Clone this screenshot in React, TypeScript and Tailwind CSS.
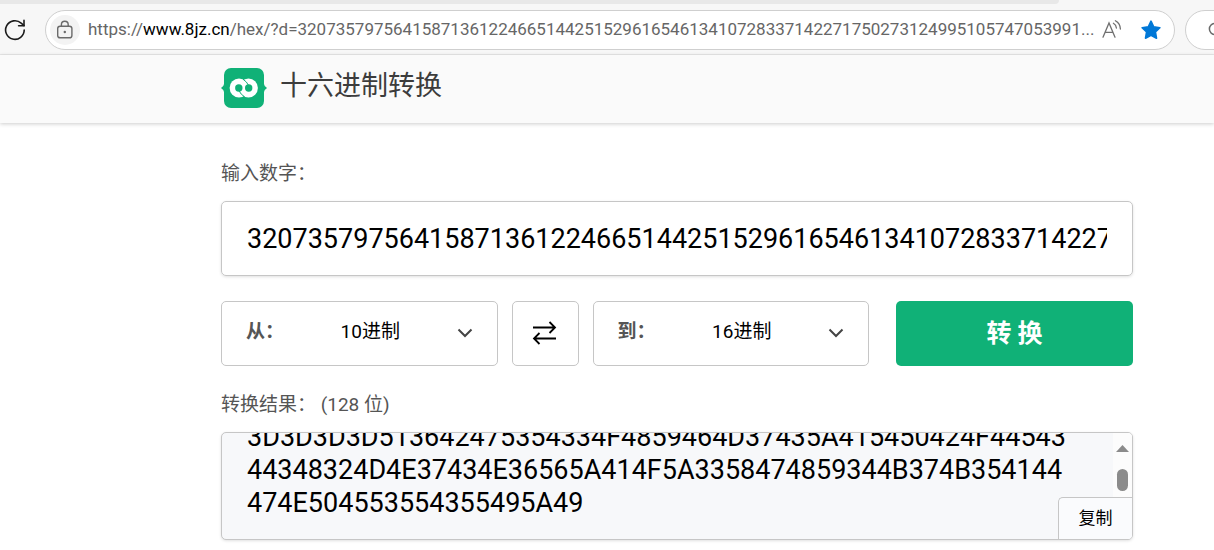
import { useLayoutEffect, useRef, useState } from "react";

const DECIMAL =
  "3207357975641587136122466514425152961654613410728337142271750273124995105747053991";

const HEX_LINES = [
  "3D3D3D3D513642475354334F4859464D37435A415450424F44543",
  "44348324D4E37434E36565A414F5A3358474859344B374B354144",
  "474E504553554355495A49",
];

const BASES = ["2", "8", "10", "16", "32"];

function ReloadIcon() {
  return (
    <svg width="22" height="22" viewBox="0 0 22 22" fill="none" stroke="#1b1b1b" strokeWidth="1.6" strokeLinecap="round">
      <path d="M20.2 11a9.3 9.3 0 1 1-3-6.8L20 6.6" />
      <path d="M20 1.4v5.4h-5.4" />
    </svg>
  );
}

function LockIcon() {
  return (
    <svg width="18" height="20" viewBox="0 0 18 20" fill="none" stroke="#6a6a6a" strokeWidth="1.4">
      <rect x="1.7" y="6.2" width="14.2" height="11.6" rx="2.4" />
      <path d="M5.4 6V4.7a3.4 3.4 0 0 1 6.8 0V6" />
      <circle cx="8.8" cy="12" r="1.2" fill="#6a6a6a" stroke="none" />
    </svg>
  );
}

function ReadAloudIcon() {
  return (
    <svg width="20" height="20" viewBox="0 0 20 20" fill="none" stroke="#707070" strokeWidth="1.3" strokeLinecap="round">
      <path d="M1 17.2 7 3l6 14.2M3.2 12.4h7.6" />
      <path d="M11.4 3.2a6 6 0 0 1 3 4.8M13.4 .8a9.6 9.6 0 0 1 5 8.2" />
    </svg>
  );
}

function StarIcon() {
  return (
    <svg width="22" height="22" viewBox="0 0 22 22">
      <path
        d="M11 2.2l2.7 5.7 6.2.8-4.5 4.3 1.1 6.2L11 16.2l-5.5 3 1.1-6.2L2.1 8.7l6.2-.8z"
        fill="#0078d7"
        stroke="#0078d7"
        strokeWidth="1.6"
        strokeLinejoin="round"
      />
    </svg>
  );
}

function Logo() {
  return (
    <svg width="46" height="40" viewBox="0 0 46 40">
      <path
        d="M10 0h26a7 7 0 0 1 7 7v9q0 2 3 4q-3 2-3 4v9a7 7 0 0 1-7 7H10a7 7 0 0 1-7-7V24q0-2-3-4q3-2 3-4V7a7 7 0 0 1 7-7z"
        fill="#10b177"
      />
      <circle cx="18" cy="20" r="9.4" fill="#fff" />
      <circle cx="27.5" cy="20" r="9.4" fill="#fff" />
      <circle cx="17.8" cy="20" r="3.7" fill="#10b177" />
      <circle cx="27.7" cy="20" r="3.7" fill="#10b177" />
      <path d="M22 11.2q4 2.6 5.4 6M18.2 23q1.4 3.4 5.4 5.8" stroke="#10b177" strokeWidth="1" fill="none" />
    </svg>
  );
}

function SwapIcon() {
  return (
    <svg width="26" height="26" viewBox="0 0 26 26" fill="none" stroke="#000" strokeWidth="1.8">
      <path d="M1 6.5h22M17.5 1l5.5 5.5-5.5 5.5M24 17.5H2M7.5 12 2 17.5 7.5 23" />
    </svg>
  );
}

function BaseSelect({ id, label, initial }: { id: string; label: string; initial: string }) {
  const [base, setBase] = useState(initial);

  return (
    <div className="flex flex-1 items-center rounded-[5px] border border-[#c6c6c6] px-6 pb-[2px]">
      <label htmlFor={id} className="text-[19px] font-bold text-[#555]">
        {label}
      </label>
      <select
        id={id}
        value={base}
        onChange={(e) => setBase(e.target.value)}
        className="min-w-0 flex-1 appearance-none bg-transparent text-center text-[19px] text-black outline-none [text-align-last:center]"
      >
        {BASES.map((b) => (
          <option key={b} value={b}>
            {b}进制
          </option>
        ))}
      </select>
      <svg width="16" height="16" viewBox="0 0 16 16" fill="none" stroke="#444" strokeWidth="2">
        <path d="M1.5 4.5 8 11l6.5-6.5" />
      </svg>
    </div>
  );
}

function BrowserBar() {
  return (
    <div className="border-b border-[#e8e8e8] bg-[#f7f7f7] pb-1">
      <div className="mr-[155px] h-1 rounded-br-lg bg-[#e8e8e8]" />
      <div className="mt-[6px] flex items-center overflow-hidden">
        <button type="button" aria-label="刷新" className="ml-1 shrink-0">
          <ReloadIcon />
        </button>
        <div className="ml-[19px] flex h-10 min-w-0 flex-1 items-center rounded-full border border-[#cfcfcf] bg-white pr-3 pl-1">
          <span className="flex size-[30px] shrink-0 items-center justify-center rounded-full bg-[#f3f3f3]">
            <LockIcon />
          </span>
          <div className="ml-2 min-w-0 flex-1 overflow-hidden font-[Roboto,'Noto_Sans',sans-serif] text-[17px] whitespace-nowrap text-[#666]">
            https://<span className="text-black">www.8jz.cn</span>/hex/?d={DECIMAL}...
          </div>
          <button type="button" aria-label="朗读此页内容" className="shrink-0">
            <ReadAloudIcon />
          </button>
          <button type="button" aria-label="收藏" className="ml-[18px] shrink-0">
            <StarIcon />
          </button>
        </div>
        <div className="-mr-6 ml-[10px] flex h-10 w-[53px] shrink-0 items-center rounded-full border border-[#cfcfcf] bg-white pl-[22px]">
          <svg width="16" height="16" viewBox="0 0 16 16" className="shrink-0" fill="none" stroke="#6a6a6a" strokeWidth="1.5">
            <circle cx="7" cy="7" r="5.6" />
          </svg>
        </div>
      </div>
    </div>
  );
}

export default function App() {
  const resultRef = useRef<HTMLTextAreaElement>(null);
  const [value, setValue] = useState(DECIMAL);

  // Keep the end of the result in view
  useLayoutEffect(() => {
    const el = resultRef.current;
    if (el) el.scrollTop = el.scrollHeight;
  }, []);

  return (
    <div className="bg-white font-[Roboto,'Noto_Sans_CJK_SC',sans-serif]">
      <BrowserBar />

      <header className="flex h-[68px] items-center bg-[#fafafa] pr-[81px] pb-[2px] pl-[221px] shadow-[0_1px_4px_rgba(0,0,0,0.2)]">
        <Logo />
        <h1 className="ml-[13px] pb-1 text-[27px] leading-[40px] text-[#3c3c3c]">十六进制转换</h1>
      </header>

      <main className="pt-[37px] pr-[81px] pb-[10px] pl-[221px]">
        <label htmlFor="number" className="block text-[19px] leading-[28px] text-[#555]">
          输入数字：
        </label>
        <input
          id="number"
          type="text"
          value={value}
          onChange={(e) => setValue(e.target.value)}
          className="mt-[13px] block h-[75px] w-full rounded-[5px] border border-[#c6c6c6] px-[25px] text-[27px] text-black shadow-[0_1px_3px_rgba(0,0,0,0.12)] outline-none"
        />

        <div className="mt-[25px] flex h-[65px] gap-[14px]">
          <BaseSelect id="from" label="从：" initial="10" />
          <button
            type="button"
            aria-label="交换"
            className="flex w-[67px] items-center justify-center rounded-[5px] border border-[#c6c6c6]"
          >
            <SwapIcon />
          </button>
          <BaseSelect id="to" label="到：" initial="16" />
          <button
            type="button"
            className="ml-[13px] w-[237px] rounded-[5px] bg-[#10b177] text-[25px] font-bold text-white"
          >
            转 换
          </button>
        </div>

        <label htmlFor="result" className="mt-[25px] block text-[19px] leading-[28px] text-[#555]">
          转换结果： (128 位)
        </label>
        <div className="relative mt-[13px] overflow-hidden rounded-[5px] border border-[#c6c6c6] bg-[#f7f8fa] shadow-[0_1px_3px_rgba(0,0,0,0.12)]">
          <textarea
            id="result"
            ref={resultRef}
            readOnly
            value={HEX_LINES.join("\n")}
            className="block h-[106px] w-full resize-none bg-transparent px-[25px] pt-[25px] pb-[19px] text-[27px] leading-[33px] whitespace-pre text-black outline-none [scrollbar-width:none]"
          />
          <div className="absolute top-0 right-0 h-16 w-[19px] bg-[#fcfcfc]">
            <svg width="13" height="7" viewBox="0 0 13 7" className="mx-auto mt-3" fill="#8b8b8b">
              <path d="M6.5 0 13 7H0z" />
            </svg>
            <div className="mx-auto mt-[17px] h-[22px] w-[11px] rounded-full bg-[#8b8b8b]" />
          </div>
          <button
            type="button"
            className="absolute right-0 bottom-0 h-[42px] w-[74px] rounded-tl-[5px] border-t border-l border-[#c6c6c6] bg-[#fafbfd] text-[17px] text-black"
          >
            复制
          </button>
        </div>
      </main>
    </div>
  );
}
